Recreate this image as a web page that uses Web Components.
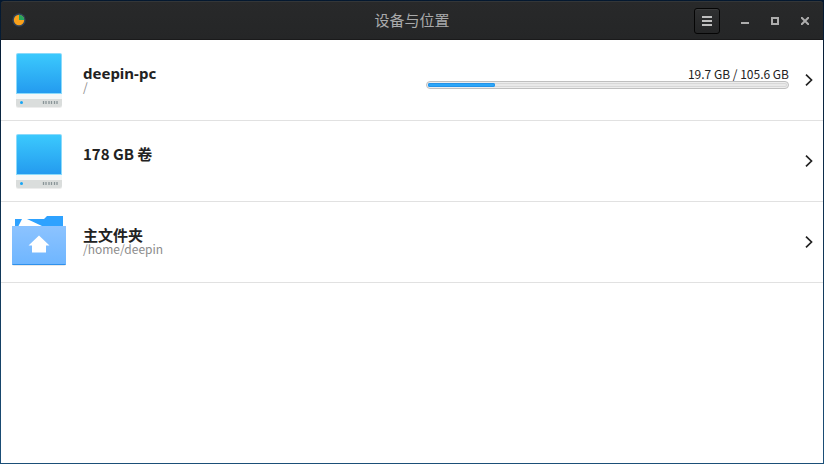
<!DOCTYPE html>
<html lang="zh-CN">
<head>
<meta charset="utf-8">
<title>设备与位置</title>
<style>
html, body { height: 100%; margin: 0; }
body { font-family: "Noto Sans CJK SC", "Noto Sans", sans-serif; color: #222; }
.host { font-family: "Noto Sans", sans-serif; }
</style>
</head>
<body>
<app-window>
  <title-bar slot="header">设备与位置</title-bar>
  <location-row icon="drive" used="19.7" total="105.6"><span slot="name" class="host">deepin-pc</span><span slot="path">/</span></location-row>
  <location-row icon="drive"><span slot="name">178 GB 卷</span></location-row>
  <location-row icon="home"><span slot="name">主文件夹</span><span slot="path">/home/deepin</span></location-row>
</app-window>

<template id="app-window">
<style>
:host { display: flex; flex-direction: column; box-sizing: border-box; height: 100%; padding: 1px; background: linear-gradient(#04182f, #1b4f78); }
main { flex: 1; background: #fff; overflow: auto; }
</style>
<slot name="header"></slot>
<main><slot></slot></main>
</template>

<template id="title-bar">
<style>
:host { display: block; }
header { display: grid; grid-template-columns: 1fr auto 1fr; align-items: center; box-sizing: border-box; height: 39px; border-top: 1px solid #333638; border-bottom: 1px solid #1a1a1b; border-radius: 3px 3px 0 0; background: linear-gradient(#28292a, #252627); color: #a9aaab; }
h1 { margin: 0; padding-bottom: 2px; font-size: 15px; line-height: 22px; font-weight: 400; }
.logo { width: 16px; height: 16px; margin-left: 10px; }
.controls { display: flex; justify-content: flex-end; align-items: center; padding-right: 3px; }
button { display: grid; place-items: center; width: 30px; height: 26px; padding: 0; border: 0; background: none; color: #adadad; }
.menu { width: 26px; margin-right: 10px; border: 1px solid #050505; border-radius: 3px; background: linear-gradient(#2f3031, #242526); box-shadow: inset 0 1px #3b3c3d; color: #bfbfbf; }
svg { display: block; }
</style>
<header>
  <svg class="logo" viewBox="0 0 16 16" aria-hidden="true"><circle cx="8" cy="7" r="6.700" fill="#30435a"/><circle cx="8" cy="7" r="5.200" fill="#f9a11b"/><path d="M8 7V1.800A5.200 5.200 0 0 1 13.200 7z" fill="#26a65f"/></svg>
  <h1><slot></slot></h1>
  <div class="controls">
    <button class="menu" aria-label="菜单"><svg width="10" height="10" fill="currentColor"><path d="M0 0h10v2H0zM0 4h10v2H0zM0 8h10v2H0z"/></svg></button>
    <button aria-label="最小化"><svg width="8" height="8" fill="currentColor"><path d="M0 5h8v2H0z"/></svg></button>
    <button aria-label="最大化"><svg width="8" height="8" fill="none" stroke="currentColor" stroke-width="2"><path d="M1 1h6v6H1z"/></svg></button>
    <button aria-label="关闭"><svg width="8" height="8" fill="none" stroke="currentColor" stroke-width="2"><path d="M0 0l8 8M8 0L0 8"/></svg></button>
  </div>
</header>
</template>

<template id="icon-drive">
<svg width="56" height="64" viewBox="0 0 56 64" aria-hidden="true">
  <defs><linearGradient id="g" x2="0" y2="1"><stop stop-color="#3bc9fd"/><stop offset="1" stop-color="#249bef"/></linearGradient></defs>
  <path d="M5 6h46v52q0 2-2 2H7q-2 0-2-2z" fill="#000" opacity=".07"/>
  <path d="M5 44h46v13q0 2-2 2H7q-2 0-2-2z" fill="#f5f7f7"/>
  <path d="M5 51h46v6q0 2-2 2H7q-2 0-2-2z" fill="#dadddc"/>
  <path d="M5 46V7q0-2 2-2h42q2 0 2 2v39z" fill="#8adafb"/>
  <path d="M6 45V7q0-1 1-1h42q1 0 1 1v38z" fill="url(#g)"/>
  <circle cx="10.5" cy="54.5" r="1.5" fill="#18a6f5"/>
  <path d="M32.500 53v3m2.500-3v3m3-3v3m2.500-3v3m3-3v3m2.500-3v3" stroke="#899497" stroke-width="1.300"/>
</svg>
</template>

<template id="icon-home">
<svg width="56" height="64" viewBox="0 0 56 64" aria-hidden="true">
  <defs><linearGradient id="f" x2="0" y2="1"><stop stop-color="#8cc3ff"/><stop offset="1" stop-color="#6fb6ff"/></linearGradient></defs>
  <path d="M4 9h29l3-3h16v14H4z" fill="#2ea2ff"/>
  <path d="M7 17l4-8h5l15 7v1z" fill="#fff"/>
  <path d="M1 17h54v37q0 2-2 2H3q-2 0-2-2z" fill="#000" opacity=".09"/>
  <path d="M1 16h54v38q0 1-1 1H2q-1 0-1-1z" fill="#2f91ec"/>
  <path d="M1 16h54v38H1z" fill="url(#f)"/>
  <path d="M28 25.500L38.500 35.500H35V42.500H21V35.500H17.500z" fill="#fff"/>
</svg>
</template>

<template id="location-row">
<style>
:host { display: flex; align-items: center; box-sizing: border-box; min-height: 81px; padding: 8px 6px 8px 10px; border-bottom: 1px solid #e1e1e1; }
svg { display: block; }
.icon { flex: none; margin-right: 16px; }
.text { flex: 1; min-width: 0; align-self: flex-start; padding-top: 15px; }
.name { height: 20px; font-size: 15px; line-height: 20px; font-weight: 700; }
.path { font-size: 12px; line-height: 8px; color: #8c8c8c; }
.usage { flex: none; width: 45%; margin-right: 12px; padding-bottom: 4px; }
label { display: block; text-align: right; font-size: 12px; line-height: 14px; }
progress { display: block; appearance: none; box-sizing: border-box; width: 100%; height: 8px; padding: 1px; border: 1px solid #bfbfbf; border-radius: 4px; background: #ededed; }
progress::-webkit-progress-bar { background: #e9e9e9; border-radius: 2px; box-shadow: inset 0 0 0 1px #d8d8d8; }
progress::-webkit-progress-value { background: #2ca7f8; border-radius: 2px; box-shadow: inset 0 0 0 1px #2493ea; }
button { flex: none; display: grid; place-items: center; width: 16px; height: 24px; padding: 0; border: 0; background: none; color: #222; }
</style>
<div class="icon"></div>
<div class="text"><div class="name"><slot name="name"></slot></div><div class="path"><slot name="path"></slot></div></div>
<div class="usage"><label for="space"></label><progress id="space"></progress></div>
<button aria-label="打开"><svg width="8" height="12" fill="none" stroke="currentColor" stroke-width="1.700"><path d="M1 .6L6.500 6L1 11.400"/></svg></button>
</template>

<script>
const stamp = id => document.getElementById(id).content.cloneNode(true);
class TemplateElement extends HTMLElement {
  constructor() {
    super();
    this.attachShadow({ mode: "open" }).append(stamp(this.localName));
  }
}
customElements.define("title-bar", class extends TemplateElement {});
customElements.define("location-row", class extends TemplateElement {
  connectedCallback() {
    const root = this.shadowRoot;
    root.querySelector(".icon").replaceChildren(stamp("icon-" + this.getAttribute("icon")));
    const used = this.getAttribute("used"), total = this.getAttribute("total");
    if (!total) { root.querySelector(".usage")?.remove(); return; }
    root.querySelector("label").textContent = `${used} GB / ${total} GB`;
    const bar = root.querySelector("progress");
    bar.max = total;
    bar.value = used;
  }
});
customElements.define("app-window", class extends TemplateElement {});
</script>
</body>
</html>
